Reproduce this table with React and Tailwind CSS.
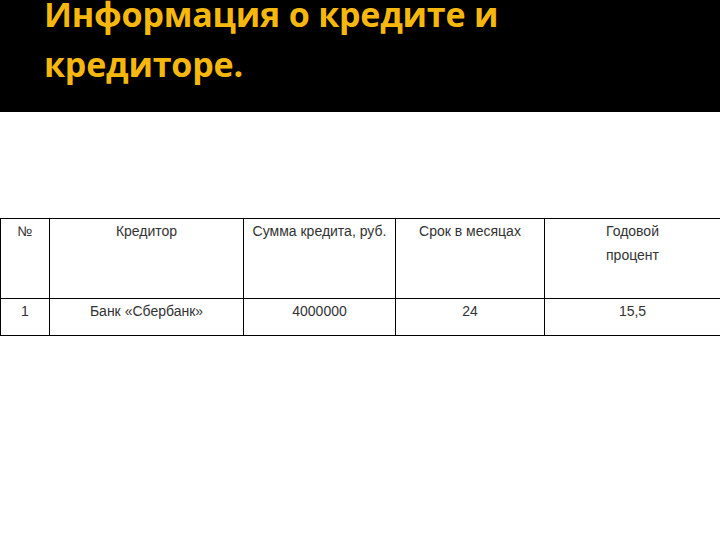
import React from 'react';

const head = ['№', 'Кредитор', 'Сумма кредита, руб.', 'Срок в месяцах', 'Годовой процент'];
const row = ['1', 'Банк «Сбербанк»', '4000000', '24', '15,5'];
const widths = ['w-[49px]', 'w-[194px]', 'w-[152px]', 'w-[149px]', 'w-[176px]'];

export default function App() {
	return (
		<div className="w-[720px] h-[540px] bg-white overflow-hidden">
			<div className="h-[112px] bg-black pl-[44px] overflow-hidden flow-root">
				<h1
					className="text-[#f6b80c] font-bold text-[34px] leading-[50px] -mt-[11px] tracking-[-0.2px]"
					style={{ fontFamily: '"Open Sans", sans-serif' }}
				>
					Информация о кредите и
					<br />
					кредиторе.
				</h1>
			</div>
			<div className="pt-[106px]">
				<table
					className="w-[721px] border-collapse text-[14px] leading-[24px] text-[#333]"
					style={{ fontFamily: '"Liberation Sans", Arial, sans-serif', tableLayout: 'fixed' }}
				>
					<colgroup>
						{widths.map((w, i) => (
							<col key={i} className={w} />
						))}
					</colgroup>
					<tbody>
						<tr className="h-[80px]">
							{head.map((t, i) => (
								<td key={i} className="border border-black text-center align-top pt-0 px-1">
									{i === 4 ? (
										<>
											Годовой
											<br />
											процент
										</>
									) : (
										t
									)}
								</td>
							))}
						</tr>
						<tr className="h-[37px]">
							{row.map((t, i) => (
								<td key={i} className="border border-black text-center align-top pt-0 px-1">
									{t}
								</td>
							))}
						</tr>
					</tbody>
				</table>
			</div>
		</div>
	);
}
